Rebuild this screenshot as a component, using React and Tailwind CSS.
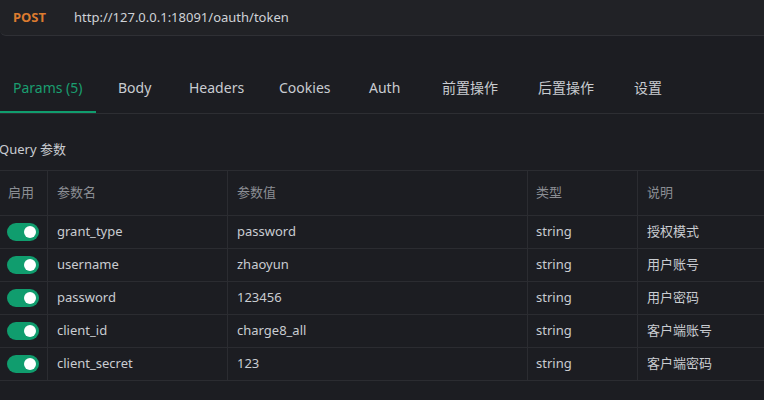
import React from 'react';

const tabs = [
  { label: 'Params (5)', w: 'w-[105px]' },
  { label: 'Body', w: 'w-[71px]' },
  { label: 'Headers', w: 'w-[90px]' },
  { label: 'Cookies', w: 'w-[90px]' },
  { label: 'Auth', w: 'w-[73px]' },
  { label: '前置操作', w: 'w-[96px]' },
  { label: '后置操作', w: 'w-[96px]' },
  { label: '设置', w: 'w-[96px]' },
];

const rows = [
  { name: 'grant_type', value: 'password', type: 'string', desc: '授权模式' },
  { name: 'username', value: 'zhaoyun', type: 'string', desc: '用户账号' },
  { name: 'password', value: '123456', type: 'string', desc: '用户密码' },
  { name: 'client_id', value: 'charge8_all', type: 'string', desc: '客户端账号' },
  { name: 'client_secret', value: '123', type: 'string', desc: '客户端密码' },
];

const Toggle = () => (
  <div className="w-[32px] h-[18px] rounded-full bg-[#109d6e] flex items-center justify-end pr-[3px]">
    <div className="w-[12px] h-[12px] rounded-full bg-white" />
  </div>
);

export default function App() {
  return (
    <div
      className="w-[764px] h-[400px] overflow-hidden bg-[#1c1d22] text-[13px] text-[#c9ccd1]"
      style={{ fontFamily: '"Noto Sans", "Noto Sans CJK SC", sans-serif' }}
    >
      {/* URL bar */}
      <div className="h-[36px] bg-[#212226] border-b border-[#2f3035] rounded-bl-[6px] flex items-center">
        <span className="ml-[13px] w-[61px] font-bold text-[#dc7b2f]">POST</span>
        <span className="text-[#cfd2d7]">http://127.0.0.1:18091/oauth/token</span>
      </div>

      {/* Tabs */}
      <div className="mt-[40px] flex border-b border-[#2d2e33] h-[38px]">
        {tabs.map((t, i) => (
          <div key={t.label} className={`${t.w} flex`}>
            <div
              className={`px-[13px] pt-[1px] text-[14px] whitespace-nowrap ${
                i === 0 ? 'text-[#1a9e70] border-b-2 border-[#109d6e]' : 'text-[#c9ccd1]'
              }`}
            >
              {t.label}
            </div>
          </div>
        ))}
      </div>

      {/* Query params */}
      <div className="mt-[26px] -ml-[1px] h-[30px]">Query 参数</div>
      <div className="border-t border-[#2b2c31]">
        <div className="grid grid-cols-[47px_180px_300px_110px_1fr] h-[45px] border-b border-[#2b2c31] text-[#8b8e94]">
          <div className="pl-[8px] flex items-center">启用</div>
          <div className="pl-[9px] flex items-center border-l border-[#2b2c31]">参数名</div>
          <div className="pl-[9px] flex items-center border-l border-[#2b2c31]">参数值</div>
          <div className="pl-[8px] flex items-center border-l border-[#2b2c31]">类型</div>
          <div className="pl-[9px] flex items-center border-l border-[#2b2c31]">说明</div>
        </div>
        {rows.map((r) => (
          <div
            key={r.name}
            className="grid grid-cols-[47px_180px_300px_110px_1fr] h-[33px] border-b border-[#2b2c31]"
          >
            <div className="pl-[7px] flex items-center">
              <Toggle />
            </div>
            <div className="pl-[9px] flex items-center border-l border-[#2b2c31]">{r.name}</div>
            <div className="pl-[9px] flex items-center border-l border-[#2b2c31]">{r.value}</div>
            <div className="pl-[8px] flex items-center border-l border-[#2b2c31]">{r.type}</div>
            <div className="pl-[9px] flex items-center border-l border-[#2b2c31]">{r.desc}</div>
          </div>
        ))}
      </div>
    </div>
  );
}
